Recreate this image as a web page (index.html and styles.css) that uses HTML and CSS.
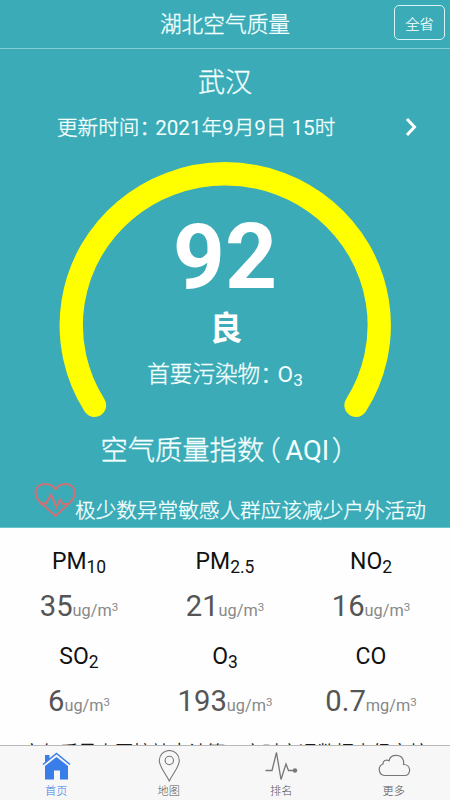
FILE: index.html
```html
<!DOCTYPE html>
<html lang="zh-CN">
<head>
<meta charset="utf-8">
<title>湖北空气质量</title>
<link rel="stylesheet" href="styles.css">
</head>
<body>
<div class="app">
  <header class="bar">
    <h1 class="title">湖北空气质量</h1>
    <button class="all">全省</button>
  </header>
  <section class="hero">
    <div class="city">武汉</div>
    <div class="update">
      <span class="time">更新时间<span class="colon">：</span><span class="latin">2021</span>年<span class="latin">9</span>月<span class="latin">9</span>日 <span class="latin">15</span>时</span>
      <svg class="chevron" width="12" height="20" viewBox="0 0 12 20"><path d="M2 2l7.500 8L2 18" fill="none" stroke="#fff" stroke-width="3"/></svg>
    </div>
    <div class="gauge">
      <svg class="arc" width="332" height="256" viewBox="0 0 332 256"><path d="M35.500 243.300A154 151.500 0 1 1 297 243.300" fill="none" stroke="#ff0" stroke-width="23.300" stroke-linecap="round"/></svg>
      <div class="value">92</div>
      <div class="level">良</div>
      <div class="primary">首要污染物<span class="colon">：</span><span class="latin">O<sub>3</sub></span></div>
    </div>
    <div class="aqi">空气质量指数<span class="open">（</span><span class="latin">AQI</span><span class="close">）</span></div>
    <div class="advice">
      <svg class="heart" width="42" height="36" viewBox="0 0 42 36" fill="none" stroke="#d17176" stroke-width="2"><path d="M21.500 34L6 20C2.500 16.500 1.500 13.500 1.500 10.500C1.500 5.500 5.500 2 11 2C15.500 2 19.500 4 21.500 7.500C23.500 4 27 2 31.500 2C37 2 40.800 5.500 40.800 10.500C40.800 13.500 39.800 16.500 36.500 20Z"/><path d="M6 21.500h6l5-9 5.500 13 3.500-8 3 4.500h7"/></svg>
      <span>极少数异常敏感人群应该减少户外活动</span>
    </div>
  </section>
  <main class="data">
    <div class="grid">
      <div class="cell"><div class="name">PM<sub>10</sub></div><div class="num">35<span class="unit">ug/m<sup>3</sup></span></div></div>
      <div class="cell"><div class="name">PM<sub>2.5</sub></div><div class="num">21<span class="unit">ug/m<sup>3</sup></span></div></div>
      <div class="cell"><div class="name">NO<sub>2</sub></div><div class="num">16<span class="unit">ug/m<sup>3</sup></span></div></div>
      <div class="cell"><div class="name">SO<sub>2</sub></div><div class="num">6<span class="unit">ug/m<sup>3</sup></span></div></div>
      <div class="cell"><div class="name">O<sub>3</sub></div><div class="num">193<span class="unit">ug/m<sup>3</sup></span></div></div>
      <div class="cell"><div class="name">CO</div><div class="num">0.7<span class="unit">mg/m<sup>3</sup></span></div></div>
    </div>
    <p class="note">空气质量由国控站点计算，实时实况数据未经审核</p>
  </main>
  <nav class="tabs">
    <div class="tab active"><svg width="30" height="32" viewBox="0 0 30 32"><path d="M4 16L15.500 7 27 16v13.500h-8v-9h-6v9H4z" fill="#397de8"/><path d="M4 5h4.500v4L4 13z" fill="#397de8"/><path d="M2 14.500L15.500 3.500 29 14.500" fill="none" stroke="#397de8" stroke-width="1.500"/></svg><span>首页</span></div>
    <div class="tab"><svg width="30" height="32" viewBox="0 0 30 32" fill="none" stroke="#777" stroke-width="1.100"><path d="M15.300 31C12 24 5.300 17 5.300 10.500a10 10 0 0 1 20 0C25.300 17 18.500 24 15.300 31z"/><circle cx="15.300" cy="10.500" r="4.200"/></svg><span>地图</span></div>
    <div class="tab"><svg width="34" height="32" viewBox="0 0 34 32" fill="none" stroke="#777" stroke-width="1.300"><path d="M1.500 20.500h6.500L12.500 2.500 17 29.500 22 14l2.500 6.500H31"/><circle cx="31" cy="20.500" r="2.200" fill="#777" stroke="none"/></svg><span>排名</span></div>
    <div class="tab"><svg width="34" height="32" viewBox="0 0 34 32" fill="none" stroke="#777" stroke-width="1.200"><path d="M7.500 25.500a6 6 0 0 1-1.500-11.500c-.2-3 3-5 6-3.200C13.500 3.500 25 3.500 26.500 11c.3 1.300.2 2.500 0 3.500C34.500 14.500 34.500 25.500 27.500 25.500z"/></svg><span>更多</span></div>
  </nav>
</div>
</body>
</html>
```
FILE: styles.css
```css
* { box-sizing: border-box; }
body { margin: 0; font-family: Roboto, "Noto Sans CJK SC", sans-serif; font-weight: 300; }
.app { width: 450px; height: 800px; display: flex; flex-direction: column; overflow: hidden; background: #fefefe; }
.bar { height: 49px; flex: none; display: grid; grid-template-columns: 1fr auto 1fr; align-items: center; background: #3aabb7; border-bottom: 1px solid #85ccd4; color: #f4ffff; }
.title { grid-column: 2; margin: 0; padding-top: 1px; font-size: 21.7px; font-weight: 300; line-height: 47px; -webkit-text-stroke: 0.35px; }
.all { justify-self: end; margin: -3px 5px 0 0; width: 51px; height: 35px; padding: 0; border: 1px solid #d8f4f6; border-radius: 5px; background: none; color: #f4ffff; font: inherit; font-size: 14.200px; -webkit-text-stroke: 0.2px; }
.hero { height: 479px; flex: none; display: flex; flex-direction: column; background: #3aabb7; color: #f4ffff; border-bottom: 1px solid #6cc4ce; -webkit-text-stroke: 0.35px; }
.latin { font-weight: 400; -webkit-text-stroke: 0; }
.city { height: 67px; padding-top: 2px; text-align: center; font-size: 27px; line-height: 65px; white-space: nowrap; }
.update { height: 24px; display: flex; align-items: center; justify-content: space-between; padding: 0 33px 0 57px; font-size: 20.600px; line-height: 24px; white-space: nowrap; }
.chevron { margin-top: -2px; }
.colon, .open, .close { font-feature-settings: "halt"; }
.colon { margin-right: 0.27em; }
.gauge { height: 256px; width: 332px; margin: 22px auto 0; display: grid; justify-items: center; grid-template-rows: 145px 44px 48px; }
.arc { grid-area: 1 / 1 / 4 / 2; }
.value { grid-area: 1 / 1; align-self: end; font-size: 91px; font-weight: 700; line-height: 100px; color: #fff; -webkit-text-stroke: 0; }
.level { grid-area: 2 / 1; padding-left: 2px; font-size: 33px; font-weight: 700; line-height: 44px; color: #fff; -webkit-text-stroke: 0; }
.primary { grid-area: 3 / 1; font-size: 22.600px; line-height: 48px; white-space: nowrap; }
sub, sup { line-height: 0; }
sub { font-size: 0.76em; vertical-align: -4px; }
.aqi { height: 64px; padding-top: 2px; text-align: center; font-size: 27.300px; line-height: 62px; white-space: nowrap; }
.open { margin: 0 0.16em 0 0.11em; }
.close { margin: 0 0.15em 0 0.1em; }
.advice { height: 45px; display: flex; padding-left: 34px; font-size: 20.650px; line-height: 59px; white-space: nowrap; }
.heart { flex: none; margin-right: -1px; }
.data { flex: 1; min-height: 0; overflow: hidden; padding: 11px 6px 0; }
.grid { display: grid; grid-template-columns: repeat(3, 146px); grid-auto-rows: 94.500px; color: #111; font-weight: 400; }
.cell { text-align: center; }
.name { font-size: 23px; line-height: 45px; }
.num { font-size: 29.200px; line-height: 45px; color: #555; }
.unit { font-size: 16.300px; color: #888; }
.unit sup { font-size: 11.500px; vertical-align: 5px; }
.note { margin: 9px 0 0; padding-left: 17px; font-size: 18.400px; line-height: 31px; color: #000; white-space: nowrap; -webkit-text-stroke: 0.3px; }
.tabs { height: 55px; flex: none; display: grid; grid-template-columns: repeat(4, 1fr); border-top: 1px solid #b8b8b8; background: #f7f7f7; padding-top: 4px; }
.tab { display: flex; flex-direction: column; align-items: center; color: #555; font-size: 11.200px; line-height: 19px; }
.active { color: #397de8; }
```
